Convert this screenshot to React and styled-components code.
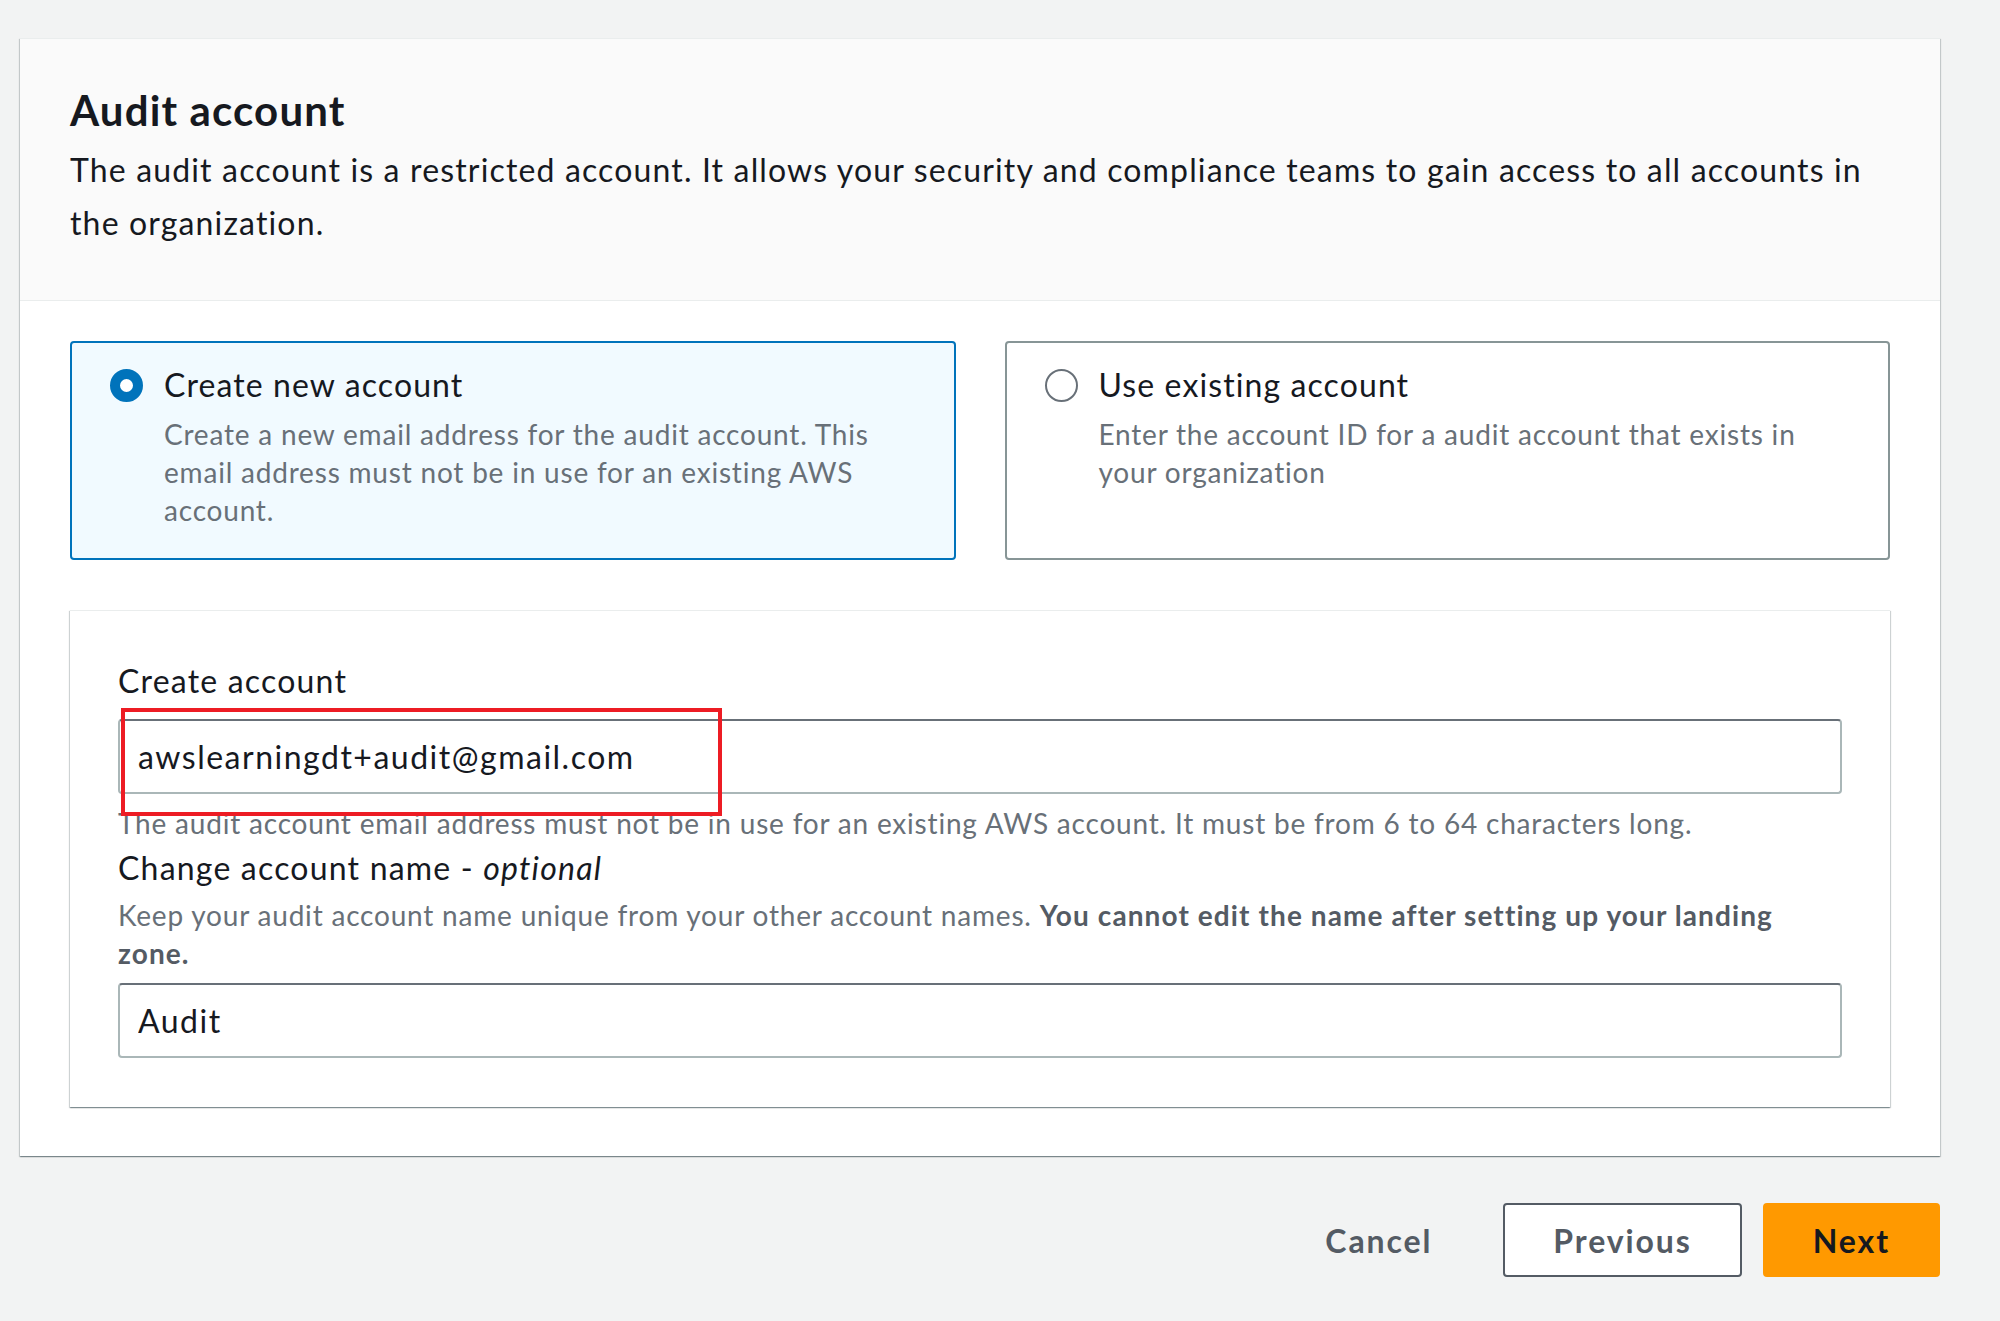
import React from "react";
import styled, { createGlobalStyle } from "styled-components";

const GlobalStyle = createGlobalStyle`
  html, body { margin: 0; padding: 0; background: #f2f3f3; }
  body { font-family: Lato, "Open Sans", Arial, sans-serif; color: #16191f; }
  * { box-sizing: border-box; }
`;

const Page = styled.div`
  padding: 38px 60px 44px 20px;
`;

const Card = styled.section`
  background: #ffffff;
  border-top: 1px solid #eaeded;
  box-shadow: 0 1px 1px 0 rgba(0, 28, 36, 0.3), 1px 1px 1px 0 rgba(0, 28, 36, 0.15),
    -1px 1px 1px 0 rgba(0, 28, 36, 0.15);
`;

const CardHeader = styled.header`
  background: #fafafa;
  border-bottom: 1px solid #eaeded;
  padding: 44px 50px 51px;
`;

const Title = styled.h2`
  margin: 0;
  font-size: 42px;
  line-height: 54px;
  font-weight: 700;
  letter-spacing: 1.15px;
  color: #16191f;
`;

const Description = styled.p`
  margin: 6px 0 0;
  font-size: 32px;
  line-height: 53px;
  letter-spacing: 1.15px;
  color: #16191f;
`;

const CardBody = styled.div`
  padding: 40px 50px 49px;
`;

const Tiles = styled.div`
  display: grid;
  grid-template-columns: 1fr 1fr;
  gap: 49px;
`;

const Tile = styled.label`
  display: flex;
  gap: 21px;
  min-height: 219px;
  padding: 20px 72px 20px 38px;
  border-radius: 4px;
  border: 2px solid ${(p) => (p.$selected ? "#0073bb" : "#879596")};
  background: ${(p) => (p.$selected ? "#f1faff" : "#ffffff")};
  cursor: pointer;
`;

const Radio = styled.span`
  flex: none;
  width: 33px;
  height: 33px;
  margin-top: 6px;
  border-radius: 50%;
  background: #ffffff;
  border: ${(p) => (p.$checked ? "10px solid #0073bb" : "2px solid #687078")};
`;

const TileText = styled.div`
  display: flex;
  flex-direction: column;
`;

const TileTitle = styled.span`
  font-size: 32px;
  line-height: 44px;
  letter-spacing: 1.1px;
  color: #16191f;
`;

const TileDesc = styled.span`
  margin-top: 8px;
  font-size: 28px;
  line-height: 38px;
  letter-spacing: 0.8px;
  color: #687078;
`;

const FormPanel = styled.div`
  position: relative;
  margin-top: 50px;
  padding: 48px 48px 49px;
  background: #ffffff;
  border-top: 1px solid #eaeded;
  box-shadow: 0 1px 1px 0 rgba(0, 28, 36, 0.3), 1px 1px 1px 0 rgba(0, 28, 36, 0.15),
    -1px 1px 1px 0 rgba(0, 28, 36, 0.15);
`;

const Field = styled.div`
  display: flex;
  flex-direction: column;
  margin-top: ${(p) => p.$top || "0"};
`;

const Label = styled.div`
  font-size: 32px;
  line-height: 44px;
  letter-spacing: 1.2px;
  color: #16191f;
  em { font-style: italic; }
`;

const Constraint = styled.div`
  margin-top: ${(p) => p.$top || "0"};
  font-size: 28px;
  line-height: 38px;
  letter-spacing: 0.8px;
  color: #687078;
  strong { font-weight: 700; color: #545b64; letter-spacing: 1.1px; }
`;

const TextInput = styled.input`
  display: block;
  width: 100%;
  height: 75px;
  margin: ${(p) => p.$margin || "0"};
  padding: 0 18px;
  font-family: Lato, "Open Sans", Arial, sans-serif;
  font-size: 32px;
  letter-spacing: 1.5px;
  color: #16191f;
  background: #ffffff;
  border: 2px solid #aab7b8;
  border-top-color: #687078;
  border-radius: 4px;
  outline: none;
`;

const Highlight = styled.div`
  position: absolute;
  left: 51px;
  top: 97px;
  width: 601px;
  height: 108px;
  border: 4px solid #ed1c24;
  pointer-events: none;
`;

const Actions = styled.div`
  display: flex;
  justify-content: flex-end;
  align-items: center;
  gap: 21px;
  margin-top: 47px;
`;

const Button = styled.button`
  height: 74px;
  padding: ${(p) => (p.$variant === "link" ? "0 48px 0 0" : "0 48px")};
  font-family: Lato, "Open Sans", Arial, sans-serif;
  font-size: 32px;
  font-weight: 700;
  letter-spacing: 1.9px;
  border-radius: 4px;
  cursor: pointer;
  color: ${(p) => (p.$variant === "primary" ? "#16191f" : "#545b64")};
  background: ${(p) =>
    p.$variant === "primary" ? "#ff9900" : p.$variant === "link" ? "transparent" : "#ffffff"};
  border: 2px solid
    ${(p) => (p.$variant === "primary" ? "#ff9900" : p.$variant === "link" ? "transparent" : "#545b64")};
`;

export default function App() {
  return (
    <>
      <GlobalStyle />
      <Page>
        <Card>
          <CardHeader>
            <Title>Audit account</Title>
            <Description>
              The audit account is a restricted account. It allows your security and compliance
              teams to gain access to all accounts in the organization.
            </Description>
          </CardHeader>
          <CardBody>
            <Tiles>
              <Tile $selected>
                <Radio $checked />
                <TileText>
                  <TileTitle>Create new account</TileTitle>
                  <TileDesc>
                    Create a new email address for the audit account. This email address must not
                    be in use for an existing AWS account.
                  </TileDesc>
                </TileText>
              </Tile>
              <Tile>
                <Radio />
                <TileText>
                  <TileTitle>Use existing account</TileTitle>
                  <TileDesc>
                    Enter the account ID for a audit account that exists in your organization
                  </TileDesc>
                </TileText>
              </Tile>
            </Tiles>
            <FormPanel>
              <Field>
                <Label>Create account</Label>
                <TextInput $margin="16px 0 10px" readOnly value="awslearningdt+audit@gmail.com" />
                <Constraint>
                  The audit account email address must not be in use for an existing AWS account. It
                  must be from 6 to 64 characters long.
                </Constraint>
              </Field>
              <Field $top="4px">
                <Label>
                  Change account name - <em>optional</em>
                </Label>
                <Constraint $top="6px">
                  Keep your audit account name unique from your other account names.{" "}
                  <strong>You cannot edit the name after setting up your landing zone.</strong>
                </Constraint>
                <TextInput $margin="11px 0 0" readOnly value="Audit" />
              </Field>
              <Highlight />
            </FormPanel>
          </CardBody>
        </Card>
        <Actions>
          <Button $variant="link">Cancel</Button>
          <Button>Previous</Button>
          <Button $variant="primary">Next</Button>
        </Actions>
      </Page>
    </>
  );
}
